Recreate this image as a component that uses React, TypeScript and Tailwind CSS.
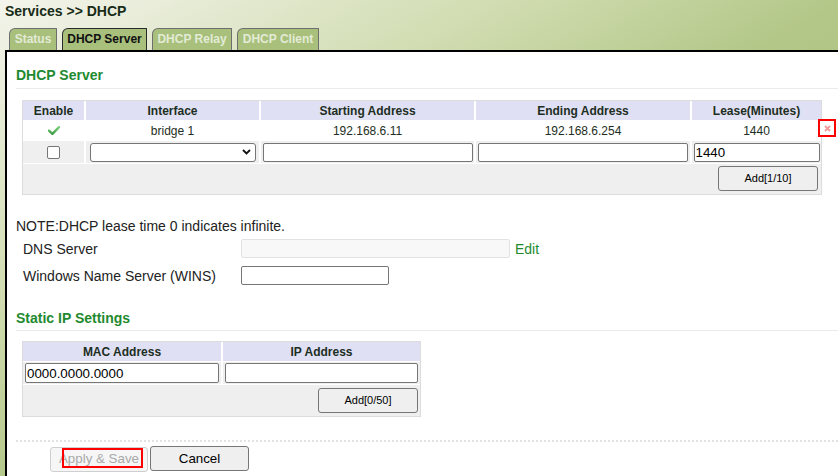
import React from "react";

const tabs = [
  { label: "Status", w: "w-[48px]", active: false },
  { label: "DHCP Server", w: "w-[85px]", active: true },
  { label: "DHCP Relay", w: "w-[80px]", active: false },
  { label: "DHCP Client", w: "w-[82px]", active: false },
];

function Check() {
  return (
    <svg width="12" height="9" viewBox="0 0 12 9">
      <defs>
        <linearGradient id="ck" x1="0" y1="0" x2="0" y2="1">
          <stop offset="0" stopColor="#7ccf7c" />
          <stop offset="1" stopColor="#3e9e44" />
        </linearGradient>
      </defs>
      <path d="M1 4.6 L4.4 7.8 L11 1.2" stroke="url(#ck)" strokeWidth="2.4" fill="none" strokeLinecap="round" strokeLinejoin="round" />
    </svg>
  );
}

function Chevron() {
  return (
    <svg width="9" height="6" viewBox="0 0 9 6">
      <path d="M1 1 L4.5 4.5 L8 1" stroke="#111" strokeWidth="1.8" fill="none" />
    </svg>
  );
}

export default function App() {
  const head = "h-[19px] bg-[#e0e0f5] font-bold flex items-center justify-center";
  const cell = "h-[19px] flex items-center justify-center";
  const cell2 = "h-[22px] bg-[#efefef] flex items-center justify-center";
  const inp =
    "h-[19px] border border-[#767676] rounded-[2px] bg-white px-[1px] text-[13.33px] leading-[15px] text-black outline-none";
  const btn =
    "w-[100px] h-[25px] border border-[#767676] rounded-[3px] bg-[#efefef] text-[11px] text-black";
  return (
    <div className="w-[838px] h-[476px] overflow-hidden flex flex-col bg-[linear-gradient(150deg,#f4f4ec_0%,#d0dcb0_31%,#b3c788_51%,#a2ba74_100%)] font-['Liberation_Sans',Arial,sans-serif]">
      <div className="h-[28px] pl-[5px] pt-[3px] text-[14px] leading-[16px] font-bold text-[#172b17]">
        Services &gt;&gt; DHCP
      </div>
      <div className="flex h-[22px] pl-[9px] gap-[5px]">
        {tabs.map((t) => (
          <div
            key={t.label}
            className={`${t.w} h-[22px] border border-b-0 rounded-tl-[6px] rounded-tr-[1px] bg-[#a8c07c] text-center text-[12px] leading-[14px] font-bold pt-[3px] ${
              t.active ? "border-[#2a2a2a] text-[#111]" : "border-[#6e6e6e] text-[#e3ebd5]"
            }`}
          >
            {t.label}
          </div>
        ))}
      </div>
      <div className="ml-[5px] flex-1 border-l-2 border-t-2 border-black bg-white">
        <div className="ml-[9px] pt-[15px] pb-[5px] border-b border-[#ebebeb] text-[14px] leading-[16px] font-bold text-[#1f8a30]">
          DHCP Server
        </div>

        <div className="relative ml-[15px] mt-[11px] w-[800px] border border-[#dcdcdc]">
          <div className="grid grid-cols-[61px_173px_213px_214px_129px] gap-x-[2px] gap-y-[1px] text-[12px] text-[#1d2e22]">
            <div className={head}>Enable</div>
            <div className={head}>Interface</div>
            <div className={head}>Starting Address</div>
            <div className={head}>Ending Address</div>
            <div className={head}>Lease(Minutes)</div>

            <div className={cell}>
              <Check />
            </div>
            <div className={cell}>bridge 1</div>
            <div className={cell}>192.168.6.11</div>
            <div className={cell}>192.168.6.254</div>
            <div className={cell}>1440</div>

            <div className={cell2}>
              <div className="w-[13px] h-[13px] border border-[#767676] rounded-[2px] bg-white" />
            </div>
            <div className={cell2}>
              <div className="w-[166px] h-[19px] border border-[#767676] rounded-[3px] bg-white flex items-center justify-end pr-[4px]">
                <Chevron />
              </div>
            </div>
            <div className={cell2}>
              <input className={`${inp} w-[210px]`} defaultValue="" />
            </div>
            <div className={cell2}>
              <input className={`${inp} w-[210px]`} defaultValue="" />
            </div>
            <div className={cell2}>
              <input className={`${inp} w-[126px]`} defaultValue="1440" />
            </div>

            <div className="col-span-5 h-[30px] bg-[#efefef] flex justify-end items-start pt-[2px] pr-[3px]">
              <button className={btn}>Add[1/10]</button>
            </div>
          </div>
          <div className="absolute left-[795px] top-[18px] w-[18px] h-[18px] border-2 border-[#ff0000] bg-white flex items-center justify-center">
            <svg width="7" height="7" viewBox="0 0 7 7">
              <path d="M1 1 L6 6 M6 1 L1 6" stroke="#f29a9a" strokeWidth="1.8" />
            </svg>
          </div>
        </div>

        <div className="ml-[9px] mt-[23px] text-[14px] leading-[16px] text-[#222]">
          NOTE:DHCP lease time 0 indicates infinite.
        </div>
        <div className="ml-[16px] mt-[5px] h-[19px] flex items-center text-[14px] leading-[16px] text-[#222]">
          <div className="w-[218px]">DNS Server</div>
          <div className="w-[269px] h-[19px] border border-[#e2e2e2] rounded-[2px] bg-[#f8f8f8]" />
          <div className="ml-[5px] text-[#1f8a30]">Edit</div>
        </div>
        <div className="ml-[16px] mt-[8px] h-[19px] flex items-center text-[14px] leading-[16px] text-[#222]">
          <div className="w-[218px]">Windows Name Server (WINS)</div>
          <input className={`${inp} w-[148px]`} defaultValue="" />
        </div>

        <div className="ml-[9px] mt-[25px] pb-[4px] border-b border-[#ebebeb] text-[14px] leading-[16px] font-bold text-[#1f8a30]">
          Static IP Settings
        </div>

        <div className="ml-[15px] mt-[10px] w-[399px] border border-[#dcdcdc]">
          <div className="grid grid-cols-[198px_197px] gap-x-[2px] gap-y-[1px] text-[12px] text-[#1d2e22]">
            <div className={head}>MAC Address</div>
            <div className={head}>IP Address</div>
            <div className="h-[22px] bg-[#efefef] flex items-center pl-[2px]">
              <input className={`${inp} w-[194px] h-[20px]`} defaultValue="0000.0000.0000" />
            </div>
            <div className="h-[22px] bg-[#efefef] flex items-center pl-[2px]">
              <input className={`${inp} w-[193px] h-[20px]`} defaultValue="" />
            </div>
            <div className="col-span-2 h-[31px] bg-[#efefef] flex justify-end items-start pt-[3px] pr-[2px]">
              <button className={btn}>Add[0/50]</button>
            </div>
          </div>
        </div>

        <div className="ml-[9px] mt-[23px] border-t-2 border-dotted border-[#e2e2e2]" />
        <div className="ml-[43px] mt-[4px] flex gap-[2px]">
          <div className="relative">
            <button className="w-[98px] h-[25px] border border-[#cfcfcf] rounded-[3px] bg-[#f6f6f6] text-[13.33px] text-[#a9a9a9]">
              Apply &amp; Save
            </button>
            <div className="absolute left-[12px] top-[2px] w-[81px] h-[20px] border-2 border-[#ff0000]" />
          </div>
          <button className="w-[99px] h-[25px] border border-[#767676] rounded-[3px] bg-[#efefef] text-[13.33px] text-black">
            Cancel
          </button>
        </div>
      </div>
    </div>
  );
}
